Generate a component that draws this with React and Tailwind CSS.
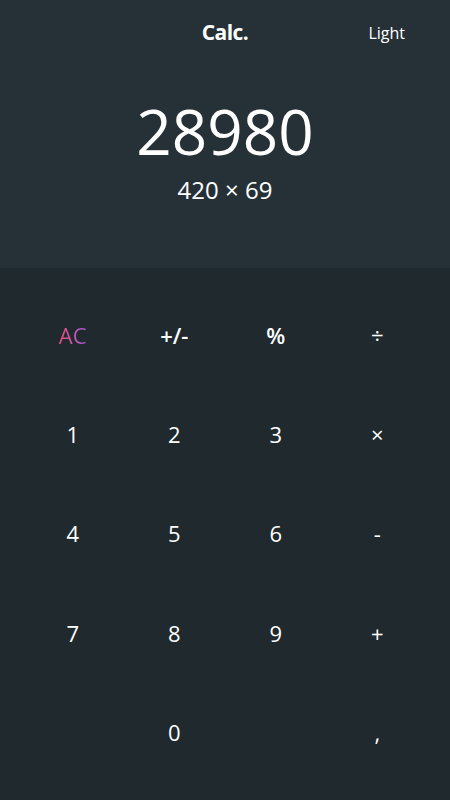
import React from "react";

const keys = [
  { label: "AC", accent: true },
  { label: "+/-", bold: true },
  { label: "%", bold: true },
  { label: "÷" },
  { label: "1" },
  { label: "2" },
  { label: "3" },
  { label: "×" },
  { label: "4" },
  { label: "5" },
  { label: "6" },
  { label: "-" },
  { label: "7" },
  { label: "8" },
  { label: "9" },
  { label: "+" },
  { label: "" },
  { label: "0" },
  { label: "" },
  { label: "," },
];

const App = () => {
  return (
    <div className="flex h-[800px] w-[450px] flex-col bg-[#20292e] font-['Open_Sans',sans-serif] text-white">
      <div className="flex h-[268px] flex-col bg-[#263137]">
        <div className="relative flex h-[66px] items-center justify-center">
          <h1 className="text-[21px] font-bold tracking-tight">Calc.</h1>
          <button type="button" className="absolute right-[45px] top-[21px] text-[16px] font-medium">
            Light
          </button>
        </div>
        <div className="mt-[23px] flex flex-col items-center">
          <div className="text-[62px] leading-[84px] font-normal">28980</div>
          <div className="text-[24px] leading-[33px]">420 × 69</div>
        </div>
      </div>

      <div className="grid flex-1 grid-cols-4 grid-rows-5 px-[22px] py-[18px]">
        {keys.map((key, i) => (
          <button
            key={i}
            type="button"
            className={`flex items-center justify-center text-[22px] ${key.bold ? "font-semibold" : ""}`}
          >
            {key.accent ? (
              <span className="bg-gradient-to-r from-[#e94b7c] to-[#a455d6] bg-clip-text text-transparent">
                {key.label}
              </span>
            ) : (
              key.label
            )}
          </button>
        ))}
      </div>
    </div>
  );
};

export default App;
